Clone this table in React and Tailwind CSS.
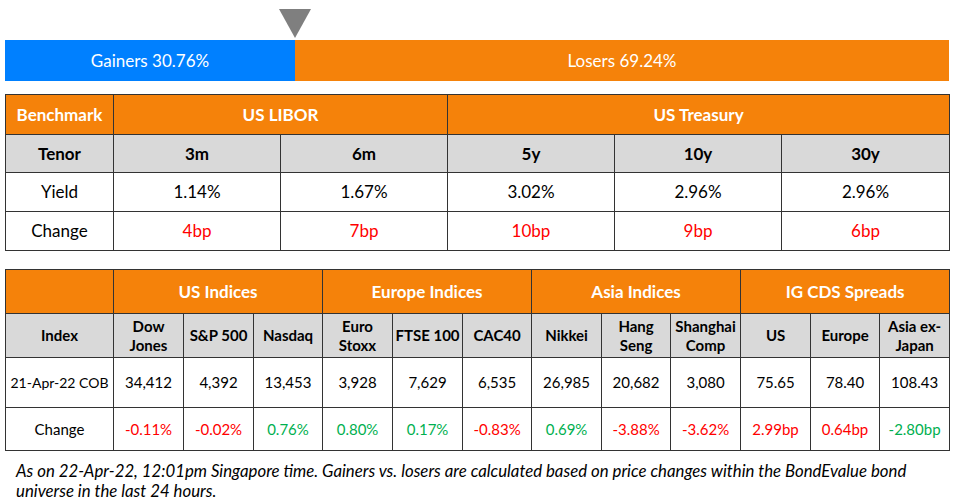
import React from 'react';

const ORANGE = 'bg-[#f5820a]';
const font = { fontFamily: 'Lato, "Open Sans", sans-serif' };

const treasury = {
  tenors: ['3m', '6m', '5y', '10y', '30y'],
  yields: ['1.14%', '1.67%', '3.02%', '2.96%', '2.96%'],
  changes: ['4bp', '7bp', '10bp', '9bp', '6bp'],
};

const groups = [
  { name: 'US Indices', span: 3 },
  { name: 'Europe Indices', span: 3 },
  { name: 'Asia Indices', span: 3 },
  { name: 'IG CDS Spreads', span: 3 },
];

// up = green, down = red
const indices = [
  { name: ['Dow', 'Jones'], value: '34,412', change: '-0.11%', up: false, w: 'w-[70px]' },
  { name: ['S&P 500'], value: '4,392', change: '-0.02%', up: false, w: 'w-[70px]' },
  { name: ['Nasdaq'], value: '13,453', change: '0.76%', up: true, w: 'w-[69px]' },
  { name: ['Euro', 'Stoxx'], value: '3,928', change: '0.80%', up: true, w: 'w-[70px]' },
  { name: ['FTSE 100'], value: '7,629', change: '0.17%', up: true, w: 'w-[70px]' },
  { name: ['CAC40'], value: '6,535', change: '-0.83%', up: false, w: 'w-[69px]' },
  { name: ['Nikkei'], value: '26,985', change: '0.69%', up: true, w: 'w-[70px]' },
  { name: ['Hang', 'Seng'], value: '20,682', change: '-3.88%', up: false, w: 'w-[69px]' },
  { name: ['Shanghai', 'Comp'], value: '3,080', change: '-3.62%', up: false, w: 'w-[70px]' },
  { name: ['US'], value: '75.65', change: '2.99bp', up: false, w: 'w-[70px]' },
  { name: ['Europe'], value: '78.40', change: '0.64bp', up: false, w: 'w-[69px]' },
  { name: ['Asia ex-', 'Japan'], value: '108.43', change: '-2.80bp', up: true, w: 'w-[70px]' },
];

const cell = 'border border-[#333333] text-center p-0';

export default function App() {
  return (
    <div className="w-[953px] h-[502px] bg-white text-black text-[16px] pl-[5px] pr-[4px] overflow-hidden" style={font}>
      {/* gainers / losers marker */}
      <div className="pt-[9px] pl-[274px]">
        <svg width="32" height="29" viewBox="0 0 32 29" className="block">
          <polygon points="0,0 32,0 16,29" fill="#7f7f7f" />
        </svg>
      </div>
      <div className="mt-[2px] flex h-[41px] text-white text-[17px]">
        <div className="w-[290px] bg-[#0080ff] flex items-center justify-center">Gainers 30.76%</div>
        <div className={`flex-1 ${ORANGE} flex items-center justify-center`}>Losers 69.24%</div>
      </div>

      {/* rates table */}
      <table className="mt-[13px] w-[944px] table-fixed border-collapse text-[17px]">
        <colgroup>
          <col className="w-[108px]" />
          <col className="w-[167px]" />
          <col className="w-[167px]" />
          <col className="w-[167px]" />
          <col className="w-[167px]" />
          <col className="w-[168px]" />
        </colgroup>
        <tbody>
          <tr className={`h-[40px] ${ORANGE} text-white font-bold`}>
            <td className={cell}>Benchmark</td>
            <td className={cell} colSpan={2}>US LIBOR</td>
            <td className={cell} colSpan={3}>US Treasury</td>
          </tr>
          <tr className="h-[38px] bg-[#d9d9d9] font-bold">
            <td className={cell}>Tenor</td>
            {treasury.tenors.map(t => <td key={t} className={cell}>{t}</td>)}
          </tr>
          <tr className="h-[39px]">
            <td className={cell}>Yield</td>
            {treasury.yields.map((y, i) => <td key={i} className={cell}>{y}</td>)}
          </tr>
          <tr className="h-[39px]">
            <td className={cell}>Change</td>
            {treasury.changes.map((c, i) => <td key={i} className={`${cell} text-[#ff0000]`}>{c}</td>)}
          </tr>
        </tbody>
      </table>

      {/* indices table */}
      <table className="mt-[18px] w-[944px] table-fixed border-collapse">
        <colgroup>
          <col className="w-[108px]" />
          {indices.map((x, i) => <col key={i} className={x.w} />)}
        </colgroup>
        <tbody>
          <tr className={`h-[44px] ${ORANGE} text-white font-bold text-[17px]`}>
            <td className={cell}></td>
            {groups.map(g => <td key={g.name} className={cell} colSpan={g.span}>{g.name}</td>)}
          </tr>
          <tr className="h-[44px] bg-[#d9d9d9] font-bold text-[15px] leading-[19px]">
            <td className={cell}>Index</td>
            {indices.map((x, i) => (
              <td key={i} className={`${cell} whitespace-nowrap`}>
                {x.name.map((n, j) => <div key={j}>{n}</div>)}
              </td>
            ))}
          </tr>
          <tr className="h-[50px] text-[15px]">
            <td className={`${cell} whitespace-nowrap text-[14px]`}>21-Apr-22 COB</td>
            {indices.map((x, i) => <td key={i} className={cell}>{x.value}</td>)}
          </tr>
          <tr className="h-[43px] text-[15px]">
            <td className={cell}>Change</td>
            {indices.map((x, i) => (
              <td key={i} className={`${cell} ${x.up ? 'text-[#00b050]' : 'text-[#ff0000]'}`}>{x.change}</td>
            ))}
          </tr>
        </tbody>
      </table>

      <p className="mt-[10px] pl-[11px] italic text-[16.8px] leading-[20px] whitespace-nowrap">
        As on 22-Apr-22, 12:01pm Singapore time. Gainers vs. losers are calculated based on price changes within the BondEvalue bond
        <br />
        universe in the last 24 hours.
      </p>
    </div>
  );
}
